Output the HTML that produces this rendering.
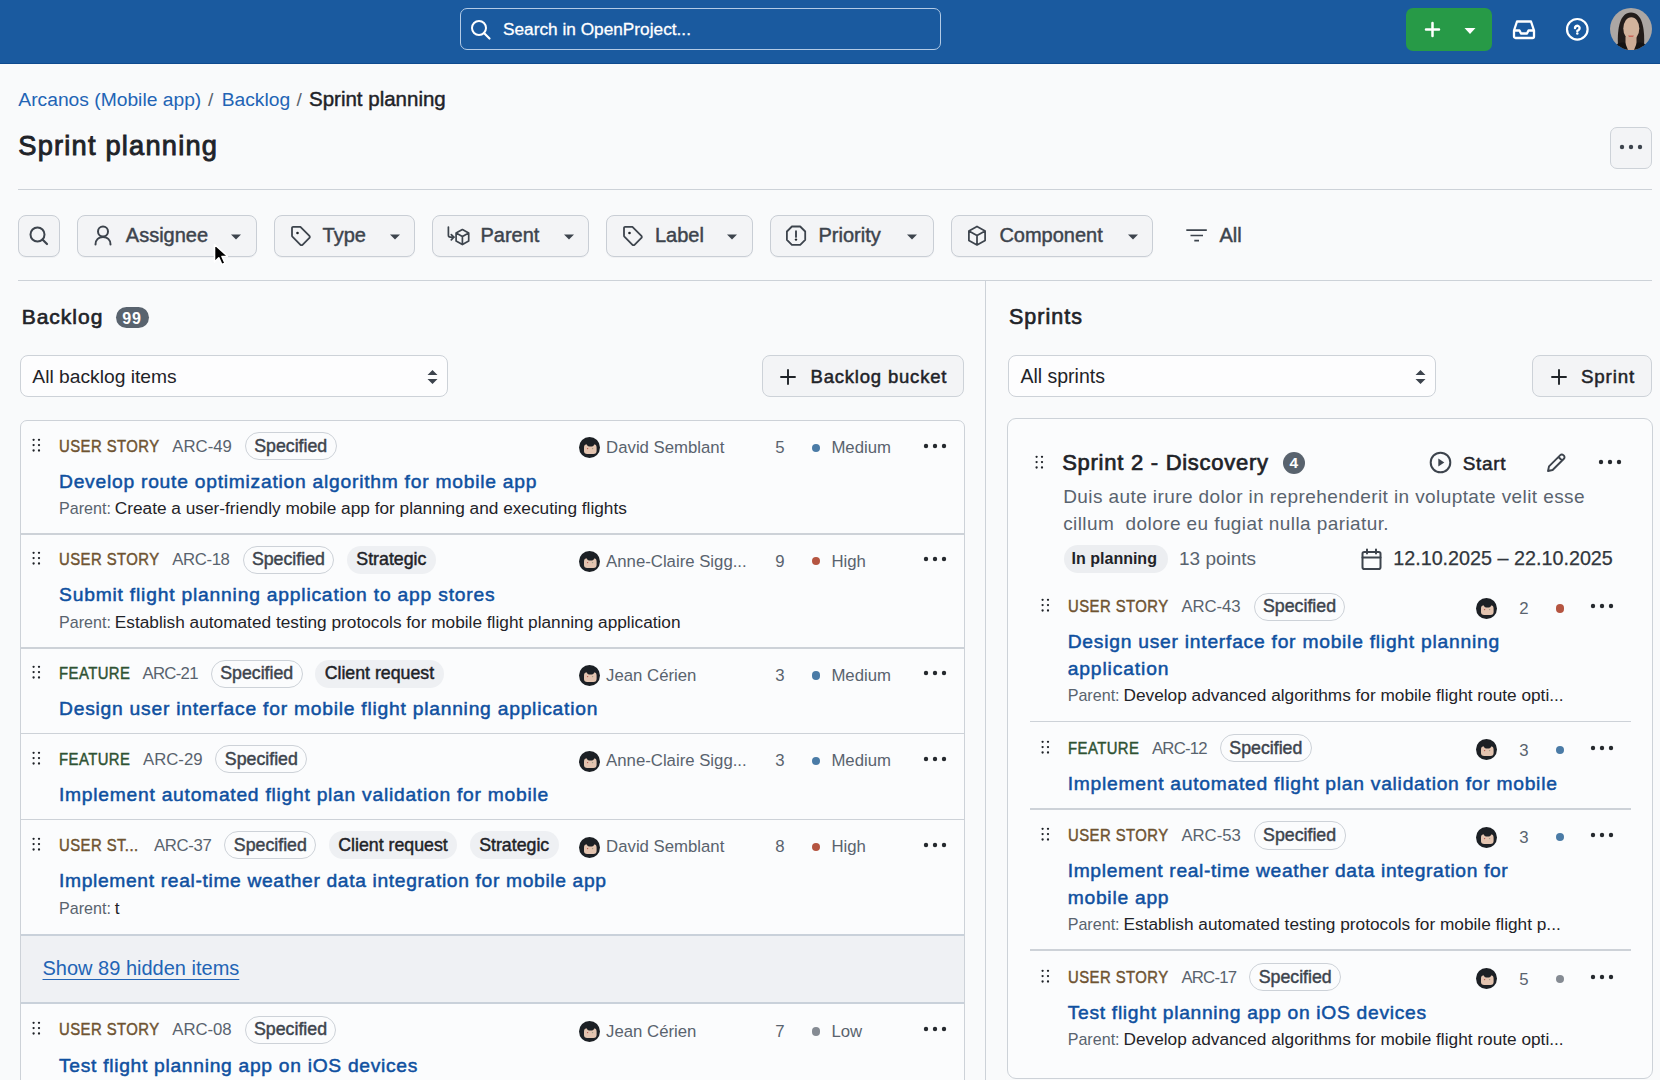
<!DOCTYPE html><html><head><meta charset="utf-8"><style>
*{margin:0;padding:0;box-sizing:border-box}
html,body{width:1660px;height:1080px;overflow:hidden;background:#f9fafb;font-family:"Liberation Sans",sans-serif;}
.t{position:absolute;white-space:nowrap;line-height:1;}
.b{position:absolute;}
</style></head><body>
<div class="b" style="left:0.00px;top:0.00px;width:1660.00px;height:64.00px;background:#1a5a9f;border-bottom:1px solid #0f4b8e;box-sizing:border-box;"></div>
<div class="b" style="left:460.00px;top:8.00px;width:481.00px;height:42.00px;border:1.5px solid #b3cbe6;border-radius:7px;box-sizing:border-box;"></div>
<svg class="b" style="left:470.00px;top:19.00px;" width="22" height="22" viewBox="0 0 22 22"><circle cx="9" cy="9" r="7" fill="none" stroke="#fff" stroke-width="2"/><line x1="14" y1="14" x2="19.5" y2="19.5" stroke="#fff" stroke-width="2.2" stroke-linecap="round"/></svg>
<div class="t " style="left:503.00px;top:21.00px;font-size:17.25px;color:#ffffff;-webkit-text-stroke:0.45px #ffffff;-webkit-text-stroke:0.3px #fff;">Search in OpenProject...</div>
<div class="b" style="left:1406.00px;top:8.00px;width:85.50px;height:42.50px;background:#279a47;border-radius:7px;"></div>
<svg class="b" style="left:1424.00px;top:20.50px;" width="17" height="17" viewBox="0 0 17 17"><path d="M8.5 2v13M2 8.5h13" stroke="#fff" stroke-width="2.5" stroke-linecap="round"/></svg>
<svg class="b" style="left:1464.00px;top:27.00px;" width="12" height="8" viewBox="0 0 12 8"><path d="M0.5 1h11L6 7z" fill="#fff"/></svg>
<svg class="b" style="left:1511.00px;top:18.00px;" width="26" height="22" viewBox="0 0 26 22"><path d="M3 12.5 6 3.5h14l3 9v6a1.5 1.5 0 0 1-1.5 1.5h-17A1.5 1.5 0 0 1 3 18.5z" fill="none" stroke="#fff" stroke-width="2.3" stroke-linejoin="round"/><path d="M3 12.5h5.5l1.5 3h6l1.5-3H23" fill="none" stroke="#fff" stroke-width="2.3" stroke-linejoin="round"/></svg>
<svg class="b" style="left:1565.00px;top:17.00px;" width="25" height="25" viewBox="0 0 25 25"><circle cx="12.3" cy="12.3" r="10.3" fill="none" stroke="#fff" stroke-width="2.2"/><path d="M10 11.1A2.3 2.3 0 1 1 13.7 12.9C12.9 13.4 12.3 13.6 12.3 14" fill="none" stroke="#fff" stroke-width="2.4" stroke-linecap="round"/><circle cx="12.3" cy="16.5" r="1.25" fill="#fff"/></svg>
<svg class="b" style="left:1610.00px;top:8.00px;" width="42" height="42" viewBox="0 0 42 42"><defs><clipPath id="ac"><circle cx="21" cy="21" r="21"/></clipPath></defs><g clip-path="url(#ac)"><rect width="42" height="42" fill="#aca7a4"/><path d="M8 38C7 20 10 4.5 21 4.5S35 20 34 38z" fill="#221c1a"/><ellipse cx="21.3" cy="20.5" rx="8" ry="11.2" fill="#d2b39c"/><rect x="15.5" y="29" width="11" height="14" fill="#ccab95"/><path d="M2 42c2-6 8-8 13-7.5l3 7.5z M24 42l3-7.5c5-.5 11 1.5 13 7.5z" fill="#151313"/><path d="M18 27.5h6l-1 1.5h-4z" fill="#c9675a"/></g></svg>
<div class="t " style="left:18.30px;top:90.00px;font-size:19.25px;color:#2264b5;">Arcanos (Mobile app)</div>
<div class="t " style="left:208.00px;top:90.00px;font-size:19.25px;color:#59636e;">/</div>
<div class="t " style="left:221.70px;top:90.00px;font-size:19.25px;color:#2264b5;">Backlog</div>
<div class="t " style="left:296.50px;top:90.00px;font-size:19.25px;color:#59636e;">/</div>
<div class="t " style="left:309.00px;top:89.00px;font-size:20.5px;color:#1f2328;-webkit-text-stroke:0.45px #1f2328;">Sprint planning</div>
<div class="t " style="left:18.30px;top:132.00px;font-size:27.25px;color:#1f2328;-webkit-text-stroke:0.5px #1f2328;letter-spacing:1.201px;-webkit-text-stroke:0.9px #1f2328;">Sprint planning</div>
<div class="b" style="left:1609.50px;top:126.50px;width:42.50px;height:42.00px;background:#f3f4f6;border:1px solid #cdd2d8;border-radius:7px;box-sizing:border-box;"></div>
<svg class="b" style="left:1619.00px;top:144.00px;" width="24" height="6" viewBox="0 0 24 6"><circle cx="3" cy="3" r="2.2" fill="#3d444d"/><circle cx="12" cy="3" r="2.2" fill="#3d444d"/><circle cx="21" cy="3" r="2.2" fill="#3d444d"/></svg>
<div class="b" style="left:18.00px;top:188.50px;width:1634.00px;height:1.00px;background:#cdd2d8;"></div>
<div class="b" style="left:18.00px;top:214.50px;width:42.00px;height:42.00px;background:#f3f4f6;border:1px solid #c9ced5;border-radius:8px;box-sizing:border-box;box-shadow:0 1px 0 rgba(31,35,40,0.04);"></div>
<svg class="b" style="left:28.00px;top:225.00px;" width="22" height="22" viewBox="0 0 22 22"><circle cx="9.5" cy="9.5" r="7" fill="none" stroke="#3d444d" stroke-width="2"/><line x1="14.5" y1="14.5" x2="19" y2="19" stroke="#3d444d" stroke-width="2.2" stroke-linecap="round"/></svg>
<div class="b" style="left:77.00px;top:214.50px;width:180.00px;height:42.00px;background:#f3f4f6;border:1px solid #c9ced5;border-radius:8px;box-sizing:border-box;box-shadow:0 1px 0 rgba(31,35,40,0.04);"></div>
<svg class="b" style="left:93.00px;top:225.00px;" width="20" height="21" viewBox="0 0 20 21"><circle cx="10" cy="6.5" r="5" fill="none" stroke="#3d444d" stroke-width="2"/><path d="M2.5 19.5c0-5 3.3-7.5 7.5-7.5s7.5 2.5 7.5 7.5" fill="none" stroke="#3d444d" stroke-width="2" stroke-linecap="round"/></svg>
<div class="t " style="left:125.80px;top:225.00px;font-size:20px;color:#3d444d;-webkit-text-stroke:0.45px #3d444d;">Assignee</div>
<svg class="b" style="left:231.00px;top:234.00px;" width="10" height="6" viewBox="0 0 10 6"><path d="M0 0.5h10L5 5.5z" fill="#3d444d"/></svg>
<div class="b" style="left:274.00px;top:214.50px;width:141.00px;height:42.00px;background:#f3f4f6;border:1px solid #c9ced5;border-radius:8px;box-sizing:border-box;box-shadow:0 1px 0 rgba(31,35,40,0.04);"></div>
<svg class="b" style="left:290.00px;top:225.00px;" width="22" height="22" viewBox="0 0 22 22"><path d="M2 2.9a1.1 1.1 0 0 1 1.1-1.1h7.3l9 9.1a1.4 1.4 0 0 1 0 2l-6.9 6.9a1.4 1.4 0 0 1-2 0L2.4 11.7A1.5 1.5 0 0 1 2 10.6z" fill="none" stroke="#3d444d" stroke-width="1.8" stroke-linejoin="round"/><circle cx="7.5" cy="8" r="1.3" fill="#1f2328"/></svg>
<div class="t " style="left:322.60px;top:225.00px;font-size:20px;color:#3d444d;-webkit-text-stroke:0.45px #3d444d;">Type</div>
<svg class="b" style="left:389.50px;top:234.00px;" width="10" height="6" viewBox="0 0 10 6"><path d="M0 0.5h10L5 5.5z" fill="#3d444d"/></svg>
<div class="b" style="left:432.00px;top:214.50px;width:157.00px;height:42.00px;background:#f3f4f6;border:1px solid #c9ced5;border-radius:8px;box-sizing:border-box;box-shadow:0 1px 0 rgba(31,35,40,0.04);"></div>
<svg class="b" style="left:446.00px;top:225.00px;" width="25" height="22" viewBox="0 0 25 22"><path d="M2.4 2.1v8.2c0 1.1.8 1.9 1.9 1.9h3.5" fill="none" stroke="#3d444d" stroke-width="1.7" stroke-linecap="round"/><path d="M5.3 9.6l2.5 2.6-2.5 2.6" fill="none" stroke="#3d444d" stroke-width="1.7" stroke-linecap="round" stroke-linejoin="round"/><path d="M16.4 4.5l6.3 3.6v8l-6.3 3.5-6.3-3.5v-8z M10.1 8.1l6.3 3.5 6.3-3.5 M16.4 11.6v8" fill="none" stroke="#3d444d" stroke-width="1.7" stroke-linejoin="round"/></svg>
<div class="t " style="left:480.50px;top:225.00px;font-size:20px;color:#3d444d;-webkit-text-stroke:0.45px #3d444d;">Parent</div>
<svg class="b" style="left:563.50px;top:234.00px;" width="10" height="6" viewBox="0 0 10 6"><path d="M0 0.5h10L5 5.5z" fill="#3d444d"/></svg>
<div class="b" style="left:606.00px;top:214.50px;width:147.00px;height:42.00px;background:#f3f4f6;border:1px solid #c9ced5;border-radius:8px;box-sizing:border-box;box-shadow:0 1px 0 rgba(31,35,40,0.04);"></div>
<svg class="b" style="left:622.00px;top:225.00px;" width="22" height="22" viewBox="0 0 22 22"><path d="M2 2.9a1.1 1.1 0 0 1 1.1-1.1h7.3l9 9.1a1.4 1.4 0 0 1 0 2l-6.9 6.9a1.4 1.4 0 0 1-2 0L2.4 11.7A1.5 1.5 0 0 1 2 10.6z" fill="none" stroke="#3d444d" stroke-width="1.8" stroke-linejoin="round"/><circle cx="7.5" cy="8" r="1.3" fill="#1f2328"/></svg>
<div class="t " style="left:655.00px;top:225.00px;font-size:20px;color:#3d444d;-webkit-text-stroke:0.45px #3d444d;">Label</div>
<svg class="b" style="left:726.50px;top:234.00px;" width="10" height="6" viewBox="0 0 10 6"><path d="M0 0.5h10L5 5.5z" fill="#3d444d"/></svg>
<div class="b" style="left:770.00px;top:214.50px;width:164.00px;height:42.00px;background:#f3f4f6;border:1px solid #c9ced5;border-radius:8px;box-sizing:border-box;box-shadow:0 1px 0 rgba(31,35,40,0.04);"></div>
<svg class="b" style="left:784.00px;top:225.00px;" width="24" height="24" viewBox="0 0 24 24"><path d="M7.9 1.5h8.3l5 5v8.4l-5 5H7.9l-5-5V6.5z" fill="none" stroke="#3d444d" stroke-width="1.8" stroke-linejoin="round"/><path d="M12 6.3v5.6" stroke="#3d444d" stroke-width="1.9" stroke-linecap="round"/><circle cx="12" cy="14.6" r="1.2" fill="#1f2328"/></svg>
<div class="t " style="left:818.50px;top:225.00px;font-size:20px;color:#3d444d;-webkit-text-stroke:0.45px #3d444d;">Priority</div>
<svg class="b" style="left:907.00px;top:234.00px;" width="10" height="6" viewBox="0 0 10 6"><path d="M0 0.5h10L5 5.5z" fill="#3d444d"/></svg>
<div class="b" style="left:950.50px;top:214.50px;width:202.50px;height:42.00px;background:#f3f4f6;border:1px solid #c9ced5;border-radius:8px;box-sizing:border-box;box-shadow:0 1px 0 rgba(31,35,40,0.04);"></div>
<svg class="b" style="left:966.00px;top:225.00px;" width="22" height="22" viewBox="0 0 22 22"><path d="M11 1.5l8.1 4.6v9.3L11 19.9l-8.1-4.5V6.1z M2.9 6.1 11 10.6l8.1-4.5 M11 10.6v9.3" fill="none" stroke="#3d444d" stroke-width="1.75" stroke-linejoin="round"/></svg>
<div class="t " style="left:999.40px;top:225.00px;font-size:20px;color:#3d444d;-webkit-text-stroke:0.45px #3d444d;">Component</div>
<svg class="b" style="left:1128.00px;top:234.00px;" width="10" height="6" viewBox="0 0 10 6"><path d="M0 0.5h10L5 5.5z" fill="#3d444d"/></svg>
<svg class="b" style="left:1186.00px;top:227.00px;" width="22" height="18" viewBox="0 0 22 18"><path d="M0.3 3.1h20.5M4.5 8.5h12.5M8.3 13.7h4.7" stroke="#3d444d" stroke-width="1.7"/></svg>
<div class="t " style="left:1219.50px;top:225.00px;font-size:20px;color:#3d444d;-webkit-text-stroke:0.45px #3d444d;">All</div>
<div class="b" style="left:18.00px;top:280.00px;width:1634.00px;height:1.00px;background:#cdd2d8;"></div>
<div class="b" style="left:985.00px;top:281.00px;width:1.00px;height:799.00px;background:#cdd2d8;"></div>
<div class="t " style="left:21.70px;top:306.00px;font-size:21.0px;color:#1f2328;-webkit-text-stroke:0.5px #1f2328;letter-spacing:0.998px;-webkit-text-stroke:0.65px #1f2328;">Backlog</div>
<div class="b" style="left:115.90px;top:307.00px;width:33.00px;height:21.00px;background:#59636e;border-radius:11px;"></div>
<div class="t " style="left:122.20px;top:311.00px;font-size:16px;color:#ffffff;font-weight:700;letter-spacing:0.8px;">99</div>
<div class="b" style="left:20.20px;top:355.20px;width:428.00px;height:42.20px;background:#fdfdfe;border:1px solid #cdd2d8;border-radius:8px;box-sizing:border-box;"></div>
<div class="t " style="left:32.30px;top:367.00px;font-size:19.25px;color:#1f2328;">All backlog items</div>
<svg class="b" style="left:426.70px;top:369.00px;" width="11" height="16" viewBox="0 0 11 16"><path d="M0.5 6 5.5 1l5 5z M0.5 10l5 5 5-5z" fill="#3d444d"/></svg>
<div class="b" style="left:761.60px;top:355.20px;width:202.70px;height:42.20px;background:#f3f4f6;border:1px solid #cdd2d8;border-radius:8px;box-sizing:border-box;"></div>
<svg class="b" style="left:780.10px;top:368.50px;" width="16" height="16" viewBox="0 0 16 16"><path d="M8 1v14M1 8h14" stroke="#1f2328" stroke-width="1.9" stroke-linecap="round"/></svg>
<div class="t " style="left:810.50px;top:368.00px;font-size:18.5px;color:#1f2328;-webkit-text-stroke:0.5px #1f2328;letter-spacing:0.804px;">Backlog bucket</div>
<div class="b" style="left:20.00px;top:419.60px;width:945.00px;height:700.00px;border:1px solid #cdd2d8;border-radius:7px;background:#fbfcfd;"></div>
<svg class="b" style="left:32.00px;top:437.60px;" width="10" height="15" viewBox="0 0 10 15"><circle cx="1.6" cy="1.8" r="1.15" fill="#1f2328"/><circle cx="1.6" cy="7.1" r="1.15" fill="#1f2328"/><circle cx="1.6" cy="12.5" r="1.15" fill="#1f2328"/><circle cx="7.0" cy="1.8" r="1.15" fill="#1f2328"/><circle cx="7.0" cy="7.1" r="1.15" fill="#1f2328"/><circle cx="7.0" cy="12.5" r="1.15" fill="#1f2328"/></svg>
<div class="t " style="left:59.00px;top:438.00px;font-size:16.5px;color:#6e5331;-webkit-text-stroke:0.45px #6e5331;letter-spacing:0.5px;transform:scaleX(0.9);transform-origin:0 0;">USER STORY</div>
<div class="t " style="left:172.30px;top:439.00px;font-size:16.75px;color:#59636e;letter-spacing:-0.01px;">ARC-49</div>
<div class="b" style="left:244.80px;top:432.00px;width:91.83px;height:28.20px;border:1px solid #cdd2d8;border-radius:14px;"></div>
<div class="t " style="left:254.20px;top:438.00px;font-size:17.75px;color:#3d444d;-webkit-text-stroke:0.45px #3d444d;">Specified</div>
<div class="t " style="left:59.00px;top:472.00px;font-size:19.25px;color:#0f50a0;-webkit-text-stroke:0.5px #0f50a0;letter-spacing:0.752px;">Develop route optimization algorithm for mobile app</div>
<div class="t " style="left:59.00px;top:500.00px;font-size:16.1px;color:#59636e;">Parent:</div>
<div class="t " style="left:114.80px;top:500.00px;font-size:17.25px;color:#1f2328;">Create a user-friendly mobile app for planning and executing flights</div>
<svg class="b" style="left:579.20px;top:437.40px;" width="21" height="21" viewBox="0 0 21 21"><circle cx="10.5" cy="10.5" r="10.5" fill="#1c2025"/><rect x="5" y="7.3" width="12.6" height="9.6" rx="3.2" fill="#e3c4b0"/><ellipse cx="11.5" cy="7.2" rx="3.6" ry="2.3" fill="#1c2025"/><circle cx="8.6" cy="11.6" r=".7" fill="#b5544a"/><circle cx="13.6" cy="11.6" r=".7" fill="#9a9a80"/></svg>
<div class="t " style="left:606.10px;top:440.00px;font-size:16.75px;color:#59636e;">David Semblant</div>
<div class="t " style="left:775.30px;top:440.00px;font-size:16.75px;color:#59636e;">5</div>
<div class="b" style="left:811.60px;top:443.60px;width:8.40px;height:8.40px;background:#4a7ba6;border-radius:50%;"></div>
<div class="t " style="left:831.40px;top:440.00px;font-size:16.75px;color:#59636e;">Medium</div>
<svg class="b" style="left:922.50px;top:442.60px;" width="24" height="6" viewBox="0 0 24 6"><circle cx="3" cy="3" r="2.2" fill="#25292e"/><circle cx="12" cy="3" r="2.2" fill="#25292e"/><circle cx="21" cy="3" r="2.2" fill="#25292e"/></svg>
<div class="b" style="left:21.00px;top:533.00px;width:943.00px;height:1.50px;background:#cdd2d8;"></div>
<svg class="b" style="left:32.00px;top:551.10px;" width="10" height="15" viewBox="0 0 10 15"><circle cx="1.6" cy="1.8" r="1.15" fill="#1f2328"/><circle cx="1.6" cy="7.1" r="1.15" fill="#1f2328"/><circle cx="1.6" cy="12.5" r="1.15" fill="#1f2328"/><circle cx="7.0" cy="1.8" r="1.15" fill="#1f2328"/><circle cx="7.0" cy="7.1" r="1.15" fill="#1f2328"/><circle cx="7.0" cy="12.5" r="1.15" fill="#1f2328"/></svg>
<div class="t " style="left:59.00px;top:551.00px;font-size:16.5px;color:#6e5331;-webkit-text-stroke:0.45px #6e5331;letter-spacing:0.5px;transform:scaleX(0.9);transform-origin:0 0;">USER STORY</div>
<div class="t " style="left:172.30px;top:552.00px;font-size:16.75px;color:#59636e;letter-spacing:-0.39px;">ARC-18</div>
<div class="b" style="left:242.50px;top:545.50px;width:91.83px;height:28.20px;border:1px solid #cdd2d8;border-radius:14px;"></div>
<div class="t " style="left:251.90px;top:551.00px;font-size:17.75px;color:#3d444d;-webkit-text-stroke:0.45px #3d444d;">Specified</div>
<div class="b" style="left:346.93px;top:545.50px;width:88.86px;height:28.20px;background:#eef0f3;border-radius:14px;"></div>
<div class="t " style="left:356.33px;top:551.00px;font-size:17.75px;color:#1f2328;-webkit-text-stroke:0.45px #1f2328;">Strategic</div>
<div class="t " style="left:59.00px;top:585.00px;font-size:19.25px;color:#0f50a0;-webkit-text-stroke:0.5px #0f50a0;letter-spacing:0.799px;">Submit flight planning application to app stores</div>
<div class="t " style="left:59.00px;top:614.00px;font-size:16.1px;color:#59636e;">Parent:</div>
<div class="t " style="left:114.80px;top:614.00px;font-size:17.25px;color:#1f2328;">Establish automated testing protocols for mobile flight planning application</div>
<svg class="b" style="left:579.20px;top:550.90px;" width="21" height="21" viewBox="0 0 21 21"><circle cx="10.5" cy="10.5" r="10.5" fill="#1c2025"/><rect x="5" y="7.3" width="12.6" height="9.6" rx="3.2" fill="#e3c4b0"/><ellipse cx="11.5" cy="7.2" rx="3.6" ry="2.3" fill="#1c2025"/><circle cx="8.6" cy="11.6" r=".7" fill="#b5544a"/><circle cx="13.6" cy="11.6" r=".7" fill="#9a9a80"/></svg>
<div class="t " style="left:606.10px;top:554.00px;font-size:16.75px;color:#59636e;">Anne-Claire Sigg...</div>
<div class="t " style="left:775.30px;top:554.00px;font-size:16.75px;color:#59636e;">9</div>
<div class="b" style="left:811.60px;top:557.10px;width:8.40px;height:8.40px;background:#b55541;border-radius:50%;"></div>
<div class="t " style="left:831.40px;top:554.00px;font-size:16.75px;color:#59636e;">High</div>
<svg class="b" style="left:922.50px;top:556.10px;" width="24" height="6" viewBox="0 0 24 6"><circle cx="3" cy="3" r="2.2" fill="#25292e"/><circle cx="12" cy="3" r="2.2" fill="#25292e"/><circle cx="21" cy="3" r="2.2" fill="#25292e"/></svg>
<div class="b" style="left:21.00px;top:647.10px;width:943.00px;height:1.50px;background:#cdd2d8;"></div>
<svg class="b" style="left:32.00px;top:665.20px;" width="10" height="15" viewBox="0 0 10 15"><circle cx="1.6" cy="1.8" r="1.15" fill="#1f2328"/><circle cx="1.6" cy="7.1" r="1.15" fill="#1f2328"/><circle cx="1.6" cy="12.5" r="1.15" fill="#1f2328"/><circle cx="7.0" cy="1.8" r="1.15" fill="#1f2328"/><circle cx="7.0" cy="7.1" r="1.15" fill="#1f2328"/><circle cx="7.0" cy="12.5" r="1.15" fill="#1f2328"/></svg>
<div class="t " style="left:59.00px;top:665.00px;font-size:16.5px;color:#2e5233;-webkit-text-stroke:0.45px #2e5233;letter-spacing:0.5px;transform:scaleX(0.9);transform-origin:0 0;">FEATURE</div>
<div class="t " style="left:142.50px;top:666.00px;font-size:16.75px;color:#59636e;letter-spacing:-0.71px;">ARC-21</div>
<div class="b" style="left:210.80px;top:659.60px;width:91.83px;height:28.20px;border:1px solid #cdd2d8;border-radius:14px;"></div>
<div class="t " style="left:220.20px;top:665.00px;font-size:17.75px;color:#3d444d;-webkit-text-stroke:0.45px #3d444d;">Specified</div>
<div class="b" style="left:315.23px;top:659.60px;width:128.33px;height:28.20px;background:#eef0f3;border-radius:14px;"></div>
<div class="t " style="left:324.63px;top:665.00px;font-size:17.75px;color:#1f2328;-webkit-text-stroke:0.45px #1f2328;">Client request</div>
<div class="t " style="left:59.00px;top:699.00px;font-size:19.25px;color:#0f50a0;-webkit-text-stroke:0.5px #0f50a0;letter-spacing:0.764px;">Design user interface for mobile flight planning application</div>
<svg class="b" style="left:579.20px;top:665.00px;" width="21" height="21" viewBox="0 0 21 21"><circle cx="10.5" cy="10.5" r="10.5" fill="#1c2025"/><rect x="5" y="7.3" width="12.6" height="9.6" rx="3.2" fill="#e3c4b0"/><ellipse cx="11.5" cy="7.2" rx="3.6" ry="2.3" fill="#1c2025"/><circle cx="8.6" cy="11.6" r=".7" fill="#b5544a"/><circle cx="13.6" cy="11.6" r=".7" fill="#9a9a80"/></svg>
<div class="t " style="left:606.10px;top:668.00px;font-size:16.75px;color:#59636e;">Jean Cérien</div>
<div class="t " style="left:775.30px;top:668.00px;font-size:16.75px;color:#59636e;">3</div>
<div class="b" style="left:811.60px;top:671.20px;width:8.40px;height:8.40px;background:#4a7ba6;border-radius:50%;"></div>
<div class="t " style="left:831.40px;top:668.00px;font-size:16.75px;color:#59636e;">Medium</div>
<svg class="b" style="left:922.50px;top:670.20px;" width="24" height="6" viewBox="0 0 24 6"><circle cx="3" cy="3" r="2.2" fill="#25292e"/><circle cx="12" cy="3" r="2.2" fill="#25292e"/><circle cx="21" cy="3" r="2.2" fill="#25292e"/></svg>
<div class="b" style="left:21.00px;top:732.80px;width:943.00px;height:1.50px;background:#cdd2d8;"></div>
<svg class="b" style="left:32.00px;top:750.90px;" width="10" height="15" viewBox="0 0 10 15"><circle cx="1.6" cy="1.8" r="1.15" fill="#1f2328"/><circle cx="1.6" cy="7.1" r="1.15" fill="#1f2328"/><circle cx="1.6" cy="12.5" r="1.15" fill="#1f2328"/><circle cx="7.0" cy="1.8" r="1.15" fill="#1f2328"/><circle cx="7.0" cy="7.1" r="1.15" fill="#1f2328"/><circle cx="7.0" cy="12.5" r="1.15" fill="#1f2328"/></svg>
<div class="t " style="left:59.00px;top:751.00px;font-size:16.5px;color:#2e5233;-webkit-text-stroke:0.45px #2e5233;letter-spacing:0.5px;transform:scaleX(0.9);transform-origin:0 0;">FEATURE</div>
<div class="t " style="left:143.10px;top:752.00px;font-size:16.75px;color:#59636e;letter-spacing:-0.04px;">ARC-29</div>
<div class="b" style="left:215.40px;top:745.30px;width:91.83px;height:28.20px;border:1px solid #cdd2d8;border-radius:14px;"></div>
<div class="t " style="left:224.80px;top:751.00px;font-size:17.75px;color:#3d444d;-webkit-text-stroke:0.45px #3d444d;">Specified</div>
<div class="t " style="left:59.00px;top:785.00px;font-size:19.25px;color:#0f50a0;-webkit-text-stroke:0.5px #0f50a0;letter-spacing:0.744px;">Implement automated flight plan validation for mobile</div>
<svg class="b" style="left:579.20px;top:750.70px;" width="21" height="21" viewBox="0 0 21 21"><circle cx="10.5" cy="10.5" r="10.5" fill="#1c2025"/><rect x="5" y="7.3" width="12.6" height="9.6" rx="3.2" fill="#e3c4b0"/><ellipse cx="11.5" cy="7.2" rx="3.6" ry="2.3" fill="#1c2025"/><circle cx="8.6" cy="11.6" r=".7" fill="#b5544a"/><circle cx="13.6" cy="11.6" r=".7" fill="#9a9a80"/></svg>
<div class="t " style="left:606.10px;top:753.00px;font-size:16.75px;color:#59636e;">Anne-Claire Sigg...</div>
<div class="t " style="left:775.30px;top:753.00px;font-size:16.75px;color:#59636e;">3</div>
<div class="b" style="left:811.60px;top:756.90px;width:8.40px;height:8.40px;background:#4a7ba6;border-radius:50%;"></div>
<div class="t " style="left:831.40px;top:753.00px;font-size:16.75px;color:#59636e;">Medium</div>
<svg class="b" style="left:922.50px;top:755.90px;" width="24" height="6" viewBox="0 0 24 6"><circle cx="3" cy="3" r="2.2" fill="#25292e"/><circle cx="12" cy="3" r="2.2" fill="#25292e"/><circle cx="21" cy="3" r="2.2" fill="#25292e"/></svg>
<div class="b" style="left:21.00px;top:818.80px;width:943.00px;height:1.50px;background:#cdd2d8;"></div>
<svg class="b" style="left:32.00px;top:836.90px;" width="10" height="15" viewBox="0 0 10 15"><circle cx="1.6" cy="1.8" r="1.15" fill="#1f2328"/><circle cx="1.6" cy="7.1" r="1.15" fill="#1f2328"/><circle cx="1.6" cy="12.5" r="1.15" fill="#1f2328"/><circle cx="7.0" cy="1.8" r="1.15" fill="#1f2328"/><circle cx="7.0" cy="7.1" r="1.15" fill="#1f2328"/><circle cx="7.0" cy="12.5" r="1.15" fill="#1f2328"/></svg>
<div class="t " style="left:59.00px;top:837.00px;font-size:16.5px;color:#6e5331;-webkit-text-stroke:0.45px #6e5331;letter-spacing:0.5px;transform:scaleX(0.9);transform-origin:0 0;">USER ST...</div>
<div class="t " style="left:153.90px;top:838.00px;font-size:16.75px;color:#59636e;letter-spacing:-0.34px;">ARC-37</div>
<div class="b" style="left:224.40px;top:831.30px;width:91.83px;height:28.20px;border:1px solid #cdd2d8;border-radius:14px;"></div>
<div class="t " style="left:233.80px;top:837.00px;font-size:17.75px;color:#3d444d;-webkit-text-stroke:0.45px #3d444d;">Specified</div>
<div class="b" style="left:328.83px;top:831.30px;width:128.33px;height:28.20px;background:#eef0f3;border-radius:14px;"></div>
<div class="t " style="left:338.23px;top:837.00px;font-size:17.75px;color:#1f2328;-webkit-text-stroke:0.45px #1f2328;">Client request</div>
<div class="b" style="left:469.76px;top:831.30px;width:88.86px;height:28.20px;background:#eef0f3;border-radius:14px;"></div>
<div class="t " style="left:479.16px;top:837.00px;font-size:17.75px;color:#1f2328;-webkit-text-stroke:0.45px #1f2328;">Strategic</div>
<div class="t " style="left:59.00px;top:871.00px;font-size:19.25px;color:#0f50a0;-webkit-text-stroke:0.5px #0f50a0;letter-spacing:0.650px;">Implement real-time weather data integration for mobile app</div>
<div class="t " style="left:59.00px;top:900.00px;font-size:16.1px;color:#59636e;">Parent:</div>
<div class="t " style="left:114.80px;top:900.00px;font-size:17.25px;color:#1f2328;">t</div>
<svg class="b" style="left:579.20px;top:836.70px;" width="21" height="21" viewBox="0 0 21 21"><circle cx="10.5" cy="10.5" r="10.5" fill="#1c2025"/><rect x="5" y="7.3" width="12.6" height="9.6" rx="3.2" fill="#e3c4b0"/><ellipse cx="11.5" cy="7.2" rx="3.6" ry="2.3" fill="#1c2025"/><circle cx="8.6" cy="11.6" r=".7" fill="#b5544a"/><circle cx="13.6" cy="11.6" r=".7" fill="#9a9a80"/></svg>
<div class="t " style="left:606.10px;top:839.00px;font-size:16.75px;color:#59636e;">David Semblant</div>
<div class="t " style="left:775.30px;top:839.00px;font-size:16.75px;color:#59636e;">8</div>
<div class="b" style="left:811.60px;top:842.90px;width:8.40px;height:8.40px;background:#b55541;border-radius:50%;"></div>
<div class="t " style="left:831.40px;top:839.00px;font-size:16.75px;color:#59636e;">High</div>
<svg class="b" style="left:922.50px;top:841.90px;" width="24" height="6" viewBox="0 0 24 6"><circle cx="3" cy="3" r="2.2" fill="#25292e"/><circle cx="12" cy="3" r="2.2" fill="#25292e"/><circle cx="21" cy="3" r="2.2" fill="#25292e"/></svg>
<div class="b" style="left:21.00px;top:933.80px;width:943.00px;height:70.00px;background:#eff1f4;border-top:2px solid #c9d1da;border-bottom:2px solid #c9d1da;"></div>
<div class="t " style="left:42.50px;top:958.00px;font-size:20px;color:#2264b5;text-decoration:underline;text-underline-offset:4px;text-decoration-thickness:1px;">Show 89 hidden items</div>
<svg class="b" style="left:32.00px;top:1021.30px;" width="10" height="15" viewBox="0 0 10 15"><circle cx="1.6" cy="1.8" r="1.15" fill="#1f2328"/><circle cx="1.6" cy="7.1" r="1.15" fill="#1f2328"/><circle cx="1.6" cy="12.5" r="1.15" fill="#1f2328"/><circle cx="7.0" cy="1.8" r="1.15" fill="#1f2328"/><circle cx="7.0" cy="7.1" r="1.15" fill="#1f2328"/><circle cx="7.0" cy="12.5" r="1.15" fill="#1f2328"/></svg>
<div class="t " style="left:59.00px;top:1021.00px;font-size:16.5px;color:#6e5331;-webkit-text-stroke:0.45px #6e5331;letter-spacing:0.5px;transform:scaleX(0.9);transform-origin:0 0;">USER STORY</div>
<div class="t " style="left:172.30px;top:1022.00px;font-size:16.75px;color:#59636e;letter-spacing:-0.04px;">ARC-08</div>
<div class="b" style="left:244.60px;top:1015.70px;width:91.83px;height:28.20px;border:1px solid #cdd2d8;border-radius:14px;"></div>
<div class="t " style="left:254.00px;top:1021.00px;font-size:17.75px;color:#3d444d;-webkit-text-stroke:0.45px #3d444d;">Specified</div>
<div class="t " style="left:59.00px;top:1056.00px;font-size:19.25px;color:#0f50a0;-webkit-text-stroke:0.5px #0f50a0;letter-spacing:0.701px;">Test flight planning app on iOS devices</div>
<svg class="b" style="left:579.20px;top:1021.10px;" width="21" height="21" viewBox="0 0 21 21"><circle cx="10.5" cy="10.5" r="10.5" fill="#1c2025"/><rect x="5" y="7.3" width="12.6" height="9.6" rx="3.2" fill="#e3c4b0"/><ellipse cx="11.5" cy="7.2" rx="3.6" ry="2.3" fill="#1c2025"/><circle cx="8.6" cy="11.6" r=".7" fill="#b5544a"/><circle cx="13.6" cy="11.6" r=".7" fill="#9a9a80"/></svg>
<div class="t " style="left:606.10px;top:1024.00px;font-size:16.75px;color:#59636e;">Jean Cérien</div>
<div class="t " style="left:775.30px;top:1024.00px;font-size:16.75px;color:#59636e;">7</div>
<div class="b" style="left:811.60px;top:1027.30px;width:8.40px;height:8.40px;background:#858b93;border-radius:50%;"></div>
<div class="t " style="left:831.40px;top:1024.00px;font-size:16.75px;color:#59636e;">Low</div>
<svg class="b" style="left:922.50px;top:1026.30px;" width="24" height="6" viewBox="0 0 24 6"><circle cx="3" cy="3" r="2.2" fill="#25292e"/><circle cx="12" cy="3" r="2.2" fill="#25292e"/><circle cx="21" cy="3" r="2.2" fill="#25292e"/></svg>
<div class="t " style="left:1008.90px;top:307.00px;font-size:21.5px;color:#1f2328;-webkit-text-stroke:0.5px #1f2328;letter-spacing:1.022px;-webkit-text-stroke:0.65px #1f2328;">Sprints</div>
<div class="b" style="left:1008.30px;top:355.20px;width:428.00px;height:42.20px;background:#fdfdfe;border:1px solid #cdd2d8;border-radius:8px;box-sizing:border-box;"></div>
<div class="t " style="left:1020.40px;top:367.00px;font-size:19.5px;color:#1f2328;">All sprints</div>
<svg class="b" style="left:1414.80px;top:369.00px;" width="11" height="16" viewBox="0 0 11 16"><path d="M0.5 6 5.5 1l5 5z M0.5 10l5 5 5-5z" fill="#3d444d"/></svg>
<div class="b" style="left:1532.30px;top:355.20px;width:119.50px;height:42.20px;background:#f3f4f6;border:1px solid #cdd2d8;border-radius:8px;box-sizing:border-box;"></div>
<svg class="b" style="left:1550.80px;top:368.50px;" width="16" height="16" viewBox="0 0 16 16"><path d="M8 1v14M1 8h14" stroke="#1f2328" stroke-width="1.9" stroke-linecap="round"/></svg>
<div class="t " style="left:1580.90px;top:368.00px;font-size:18.75px;color:#1f2328;-webkit-text-stroke:0.5px #1f2328;letter-spacing:0.865px;">Sprint</div>
<div class="b" style="left:1006.70px;top:418.30px;width:646.80px;height:660.30px;border:1px solid #cdd2d8;border-radius:9px;background:#fbfcfd;"></div>
<svg class="b" style="left:1035.00px;top:455.00px;" width="10" height="15" viewBox="0 0 10 15"><circle cx="1.6" cy="1.8" r="1.15" fill="#1f2328"/><circle cx="1.6" cy="7.1" r="1.15" fill="#1f2328"/><circle cx="1.6" cy="12.5" r="1.15" fill="#1f2328"/><circle cx="7.0" cy="1.8" r="1.15" fill="#1f2328"/><circle cx="7.0" cy="7.1" r="1.15" fill="#1f2328"/><circle cx="7.0" cy="12.5" r="1.15" fill="#1f2328"/></svg>
<div class="t " style="left:1062.20px;top:452.00px;font-size:22.0px;color:#1f2328;-webkit-text-stroke:0.5px #1f2328;letter-spacing:0.734px;-webkit-text-stroke:0.7px #1f2328;">Sprint 2 - Discovery</div>
<div class="b" style="left:1282.70px;top:451.70px;width:22.50px;height:22.50px;background:#59636e;border-radius:50%;"></div>
<div class="t " style="left:1289.60px;top:455.00px;font-size:15.5px;color:#fff;font-weight:700;">4</div>
<svg class="b" style="left:1429.00px;top:451.00px;" width="23" height="23" viewBox="0 0 23 23"><circle cx="11.5" cy="11.5" r="9.8" fill="none" stroke="#3d444d" stroke-width="2"/><path d="M9.3 7.6v7.8l6-3.9z" fill="#3d444d"/></svg>
<div class="t " style="left:1462.80px;top:454.00px;font-size:19.0px;color:#1f2328;-webkit-text-stroke:0.5px #1f2328;letter-spacing:0.631px;">Start</div>
<svg class="b" style="left:1545.00px;top:452.00px;" width="22" height="22" viewBox="0 0 22 22"><path d="M3 19l1-4.6L15.3 3.1a2.1 2.1 0 0 1 3 0l.6.6a2.1 2.1 0 0 1 0 3L7.6 18 3 19z M13.5 5l3.5 3.5" fill="none" stroke="#3d444d" stroke-width="1.9" stroke-linejoin="round"/></svg>
<svg class="b" style="left:1597.50px;top:458.50px;" width="24" height="6" viewBox="0 0 24 6"><circle cx="3" cy="3" r="2.2" fill="#25292e"/><circle cx="12" cy="3" r="2.2" fill="#25292e"/><circle cx="21" cy="3" r="2.2" fill="#25292e"/></svg>
<div class="t " style="left:1063.20px;top:487.00px;font-size:19px;color:#59636e;letter-spacing:0.41px;">Duis aute irure dolor in reprehenderit in voluptate velit esse</div>
<div class="t " style="left:1063.20px;top:514.00px;font-size:19px;color:#59636e;letter-spacing:0.41px;">cillum &nbsp;dolore eu fugiat nulla pariatur.</div>
<div class="b" style="left:1063.60px;top:544.80px;width:104.40px;height:28.20px;background:#eceef1;border-radius:14px;"></div>
<div class="t " style="left:1071.60px;top:551.00px;font-size:16px;color:#1f2328;font-weight:700;">In planning</div>
<div class="t " style="left:1179.00px;top:549.00px;font-size:19px;color:#59636e;">13 points</div>
<svg class="b" style="left:1360.50px;top:547.50px;" width="21" height="23" viewBox="0 0 21 23"><rect x="1.5" y="4" width="18" height="17" rx="1.8" fill="none" stroke="#3d444d" stroke-width="2"/><path d="M1.5 9.5h18M6 1.5v4M15 1.5v4" stroke="#3d444d" stroke-width="2" stroke-linecap="round"/></svg>
<div class="t " style="left:1393.20px;top:549.00px;font-size:19.75px;color:#31363c;-webkit-text-stroke:0.45px #31363c;-webkit-text-stroke:0.25px #31363c;">12.10.2025 – 22.10.2025</div>
<svg class="b" style="left:1041.00px;top:598.20px;" width="10" height="15" viewBox="0 0 10 15"><circle cx="1.6" cy="1.8" r="1.15" fill="#1f2328"/><circle cx="1.6" cy="7.1" r="1.15" fill="#1f2328"/><circle cx="1.6" cy="12.5" r="1.15" fill="#1f2328"/><circle cx="7.0" cy="1.8" r="1.15" fill="#1f2328"/><circle cx="7.0" cy="7.1" r="1.15" fill="#1f2328"/><circle cx="7.0" cy="12.5" r="1.15" fill="#1f2328"/></svg>
<div class="t " style="left:1067.70px;top:598.00px;font-size:16.5px;color:#6e5331;-webkit-text-stroke:0.45px #6e5331;letter-spacing:0.5px;transform:scaleX(0.9);transform-origin:0 0;">USER STORY</div>
<div class="t " style="left:1181.40px;top:599.00px;font-size:16.75px;color:#59636e;letter-spacing:-0.06px;">ARC-43</div>
<div class="b" style="left:1253.60px;top:592.60px;width:91.83px;height:28.20px;border:1px solid #cdd2d8;border-radius:14px;"></div>
<div class="t " style="left:1263.00px;top:598.00px;font-size:17.75px;color:#3d444d;-webkit-text-stroke:0.45px #3d444d;">Specified</div>
<div class="t " style="left:1067.70px;top:632.00px;font-size:19.25px;color:#0f50a0;-webkit-text-stroke:0.5px #0f50a0;letter-spacing:0.755px;">Design user interface for mobile flight planning</div>
<div class="t " style="left:1067.70px;top:659.00px;font-size:19.25px;color:#0f50a0;-webkit-text-stroke:0.5px #0f50a0;letter-spacing:0.871px;">application</div>
<div class="t " style="left:1067.70px;top:687.00px;font-size:16.1px;color:#59636e;">Parent:</div>
<div class="t " style="left:1123.50px;top:687.00px;font-size:17.25px;color:#1f2328;">Develop advanced algorithms for mobile flight route opti...</div>
<svg class="b" style="left:1475.90px;top:597.70px;" width="21" height="21" viewBox="0 0 21 21"><circle cx="10.5" cy="10.5" r="10.5" fill="#1c2025"/><rect x="5" y="7.3" width="12.6" height="9.6" rx="3.2" fill="#e3c4b0"/><ellipse cx="11.5" cy="7.2" rx="3.6" ry="2.3" fill="#1c2025"/><circle cx="8.6" cy="11.6" r=".7" fill="#b5544a"/><circle cx="13.6" cy="11.6" r=".7" fill="#9a9a80"/></svg>
<div class="t " style="left:1519.30px;top:601.00px;font-size:16.75px;color:#59636e;">2</div>
<div class="b" style="left:1555.90px;top:604.40px;width:8.20px;height:8.20px;background:#b55541;border-radius:50%;"></div>
<svg class="b" style="left:1589.50px;top:603.20px;" width="24" height="6" viewBox="0 0 24 6"><circle cx="3" cy="3" r="2.2" fill="#25292e"/><circle cx="12" cy="3" r="2.2" fill="#25292e"/><circle cx="21" cy="3" r="2.2" fill="#25292e"/></svg>
<div class="b" style="left:1029.50px;top:720.90px;width:601.20px;height:1.50px;background:#cdd2d8;"></div>
<svg class="b" style="left:1041.00px;top:739.90px;" width="10" height="15" viewBox="0 0 10 15"><circle cx="1.6" cy="1.8" r="1.15" fill="#1f2328"/><circle cx="1.6" cy="7.1" r="1.15" fill="#1f2328"/><circle cx="1.6" cy="12.5" r="1.15" fill="#1f2328"/><circle cx="7.0" cy="1.8" r="1.15" fill="#1f2328"/><circle cx="7.0" cy="7.1" r="1.15" fill="#1f2328"/><circle cx="7.0" cy="12.5" r="1.15" fill="#1f2328"/></svg>
<div class="t " style="left:1067.70px;top:740.00px;font-size:16.5px;color:#2e5233;-webkit-text-stroke:0.45px #2e5233;letter-spacing:0.5px;transform:scaleX(0.9);transform-origin:0 0;">FEATURE</div>
<div class="t " style="left:1151.90px;top:741.00px;font-size:16.75px;color:#59636e;letter-spacing:-0.76px;">ARC-12</div>
<div class="b" style="left:1219.90px;top:734.30px;width:91.83px;height:28.20px;border:1px solid #cdd2d8;border-radius:14px;"></div>
<div class="t " style="left:1229.30px;top:740.00px;font-size:17.75px;color:#3d444d;-webkit-text-stroke:0.45px #3d444d;">Specified</div>
<div class="t " style="left:1067.70px;top:774.00px;font-size:19.25px;color:#0f50a0;-webkit-text-stroke:0.5px #0f50a0;letter-spacing:0.744px;">Implement automated flight plan validation for mobile</div>
<svg class="b" style="left:1475.90px;top:739.40px;" width="21" height="21" viewBox="0 0 21 21"><circle cx="10.5" cy="10.5" r="10.5" fill="#1c2025"/><rect x="5" y="7.3" width="12.6" height="9.6" rx="3.2" fill="#e3c4b0"/><ellipse cx="11.5" cy="7.2" rx="3.6" ry="2.3" fill="#1c2025"/><circle cx="8.6" cy="11.6" r=".7" fill="#b5544a"/><circle cx="13.6" cy="11.6" r=".7" fill="#9a9a80"/></svg>
<div class="t " style="left:1519.30px;top:743.00px;font-size:16.75px;color:#59636e;">3</div>
<div class="b" style="left:1555.90px;top:746.10px;width:8.20px;height:8.20px;background:#4a7ba6;border-radius:50%;"></div>
<svg class="b" style="left:1589.50px;top:744.90px;" width="24" height="6" viewBox="0 0 24 6"><circle cx="3" cy="3" r="2.2" fill="#25292e"/><circle cx="12" cy="3" r="2.2" fill="#25292e"/><circle cx="21" cy="3" r="2.2" fill="#25292e"/></svg>
<div class="b" style="left:1029.50px;top:808.10px;width:601.20px;height:1.50px;background:#cdd2d8;"></div>
<svg class="b" style="left:1041.00px;top:827.00px;" width="10" height="15" viewBox="0 0 10 15"><circle cx="1.6" cy="1.8" r="1.15" fill="#1f2328"/><circle cx="1.6" cy="7.1" r="1.15" fill="#1f2328"/><circle cx="1.6" cy="12.5" r="1.15" fill="#1f2328"/><circle cx="7.0" cy="1.8" r="1.15" fill="#1f2328"/><circle cx="7.0" cy="7.1" r="1.15" fill="#1f2328"/><circle cx="7.0" cy="12.5" r="1.15" fill="#1f2328"/></svg>
<div class="t " style="left:1067.70px;top:827.00px;font-size:16.5px;color:#6e5331;-webkit-text-stroke:0.45px #6e5331;letter-spacing:0.5px;transform:scaleX(0.9);transform-origin:0 0;">USER STORY</div>
<div class="t " style="left:1181.40px;top:828.00px;font-size:16.75px;color:#59636e;letter-spacing:-0.04px;">ARC-53</div>
<div class="b" style="left:1253.70px;top:821.40px;width:91.83px;height:28.20px;border:1px solid #cdd2d8;border-radius:14px;"></div>
<div class="t " style="left:1263.10px;top:827.00px;font-size:17.75px;color:#3d444d;-webkit-text-stroke:0.45px #3d444d;">Specified</div>
<div class="t " style="left:1067.70px;top:861.00px;font-size:19.25px;color:#0f50a0;-webkit-text-stroke:0.5px #0f50a0;letter-spacing:0.644px;">Implement real-time weather data integration for</div>
<div class="t " style="left:1067.70px;top:888.00px;font-size:19.25px;color:#0f50a0;-webkit-text-stroke:0.5px #0f50a0;letter-spacing:0.745px;">mobile app</div>
<div class="t " style="left:1067.70px;top:916.00px;font-size:16.1px;color:#59636e;">Parent:</div>
<div class="t " style="left:1123.50px;top:916.00px;font-size:17.25px;color:#1f2328;">Establish automated testing protocols for mobile flight p...</div>
<svg class="b" style="left:1475.90px;top:826.50px;" width="21" height="21" viewBox="0 0 21 21"><circle cx="10.5" cy="10.5" r="10.5" fill="#1c2025"/><rect x="5" y="7.3" width="12.6" height="9.6" rx="3.2" fill="#e3c4b0"/><ellipse cx="11.5" cy="7.2" rx="3.6" ry="2.3" fill="#1c2025"/><circle cx="8.6" cy="11.6" r=".7" fill="#b5544a"/><circle cx="13.6" cy="11.6" r=".7" fill="#9a9a80"/></svg>
<div class="t " style="left:1519.30px;top:830.00px;font-size:16.75px;color:#59636e;">3</div>
<div class="b" style="left:1555.90px;top:833.20px;width:8.20px;height:8.20px;background:#4a7ba6;border-radius:50%;"></div>
<svg class="b" style="left:1589.50px;top:832.00px;" width="24" height="6" viewBox="0 0 24 6"><circle cx="3" cy="3" r="2.2" fill="#25292e"/><circle cx="12" cy="3" r="2.2" fill="#25292e"/><circle cx="21" cy="3" r="2.2" fill="#25292e"/></svg>
<div class="b" style="left:1029.50px;top:949.30px;width:601.20px;height:1.50px;background:#cdd2d8;"></div>
<svg class="b" style="left:1041.00px;top:968.90px;" width="10" height="15" viewBox="0 0 10 15"><circle cx="1.6" cy="1.8" r="1.15" fill="#1f2328"/><circle cx="1.6" cy="7.1" r="1.15" fill="#1f2328"/><circle cx="1.6" cy="12.5" r="1.15" fill="#1f2328"/><circle cx="7.0" cy="1.8" r="1.15" fill="#1f2328"/><circle cx="7.0" cy="7.1" r="1.15" fill="#1f2328"/><circle cx="7.0" cy="12.5" r="1.15" fill="#1f2328"/></svg>
<div class="t " style="left:1067.70px;top:969.00px;font-size:16.5px;color:#6e5331;-webkit-text-stroke:0.45px #6e5331;letter-spacing:0.5px;transform:scaleX(0.9);transform-origin:0 0;">USER STORY</div>
<div class="t " style="left:1181.40px;top:970.00px;font-size:16.75px;color:#59636e;letter-spacing:-0.78px;">ARC-17</div>
<div class="b" style="left:1249.30px;top:963.30px;width:91.83px;height:28.20px;border:1px solid #cdd2d8;border-radius:14px;"></div>
<div class="t " style="left:1258.70px;top:969.00px;font-size:17.75px;color:#3d444d;-webkit-text-stroke:0.45px #3d444d;">Specified</div>
<div class="t " style="left:1067.70px;top:1003.00px;font-size:19.25px;color:#0f50a0;-webkit-text-stroke:0.5px #0f50a0;letter-spacing:0.701px;">Test flight planning app on iOS devices</div>
<div class="t " style="left:1067.70px;top:1031.00px;font-size:16.1px;color:#59636e;">Parent:</div>
<div class="t " style="left:1123.50px;top:1031.00px;font-size:17.25px;color:#1f2328;">Develop advanced algorithms for mobile flight route opti...</div>
<svg class="b" style="left:1475.90px;top:968.40px;" width="21" height="21" viewBox="0 0 21 21"><circle cx="10.5" cy="10.5" r="10.5" fill="#1c2025"/><rect x="5" y="7.3" width="12.6" height="9.6" rx="3.2" fill="#e3c4b0"/><ellipse cx="11.5" cy="7.2" rx="3.6" ry="2.3" fill="#1c2025"/><circle cx="8.6" cy="11.6" r=".7" fill="#b5544a"/><circle cx="13.6" cy="11.6" r=".7" fill="#9a9a80"/></svg>
<div class="t " style="left:1519.30px;top:972.00px;font-size:16.75px;color:#59636e;">5</div>
<div class="b" style="left:1555.90px;top:975.10px;width:8.20px;height:8.20px;background:#858b93;border-radius:50%;"></div>
<svg class="b" style="left:1589.50px;top:973.90px;" width="24" height="6" viewBox="0 0 24 6"><circle cx="3" cy="3" r="2.2" fill="#25292e"/><circle cx="12" cy="3" r="2.2" fill="#25292e"/><circle cx="21" cy="3" r="2.2" fill="#25292e"/></svg>
<svg class="b" style="left:212.00px;top:242.00px;" width="16" height="24" viewBox="0 0 16 24"><path d="M2.5 2.5v17.5l4.3-4.2 3 6.8 3.2-1.4-3-6.7h6z" fill="#000" stroke="#fff" stroke-width="1.6" stroke-linejoin="round"/></svg>
</body></html>
